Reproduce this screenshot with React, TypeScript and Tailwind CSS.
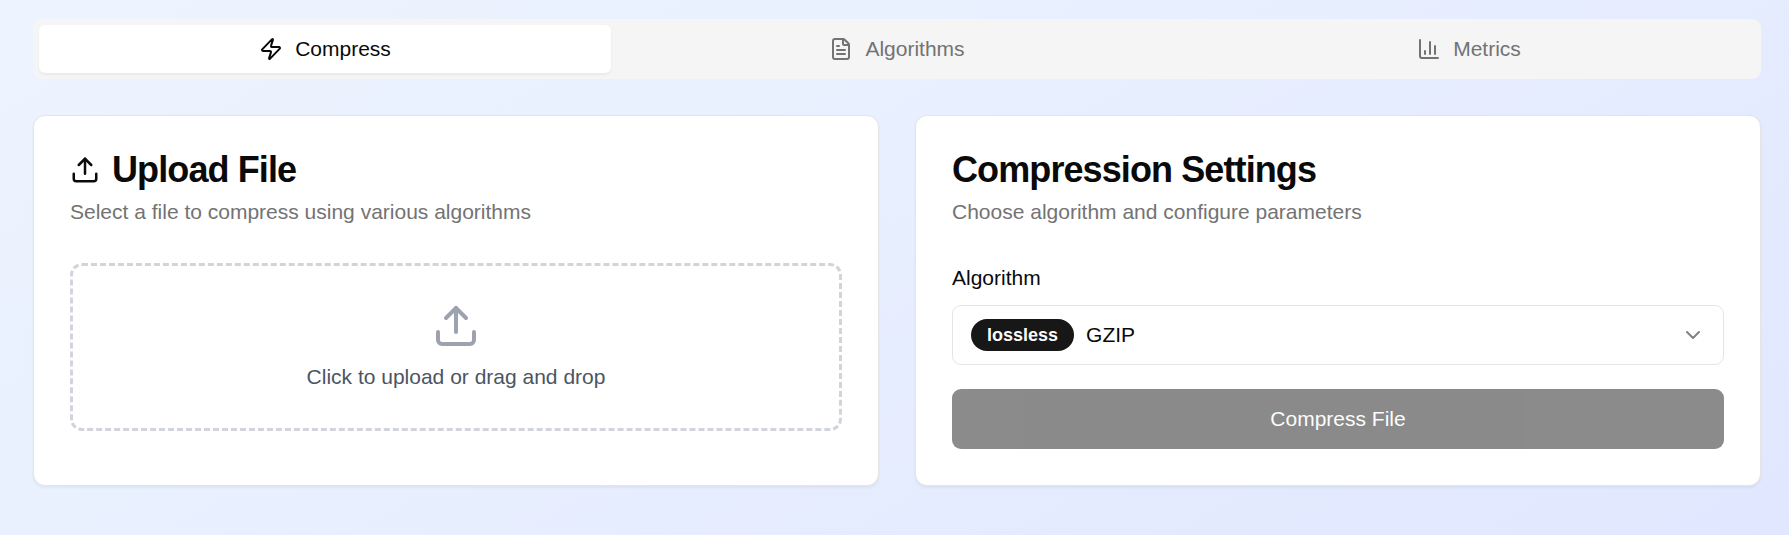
import type { ReactNode } from "react";
import { ChevronDown, FileText, Upload, Zap } from "lucide-react";

function ChartIcon() {
  return (
    <svg
      viewBox="0 0 24 24"
      className="mr-3 size-6"
      fill="none"
      stroke="currentColor"
      strokeWidth="2"
      strokeLinecap="round"
      strokeLinejoin="round"
    >
      <path d="M3 3v16a2 2 0 0 0 2 2h16" />
      <path d="M18 17V9" />
      <path d="M13 17V5" />
      <path d="M8 17v-3" />
    </svg>
  );
}

function Tab({ active = false, children }: { active?: boolean; children: ReactNode }) {
  return (
    <button
      className={
        active
          ? "flex items-center justify-center rounded-md bg-white text-[21px] leading-[30px] text-neutral-950 shadow-[0_1.5px_3px_rgba(0,0,0,0.05)]"
          : "flex items-center justify-center rounded-md text-[21px] leading-[30px] text-[#737373]"
      }
    >
      {children}
    </button>
  );
}

function Card({ title, description, children }: { title: ReactNode; description: string; children: ReactNode }) {
  return (
    <section className="rounded-xl border border-neutral-200 bg-white p-9 shadow-[0_1.5px_3px_rgba(0,0,0,0.05)]">
      <h3 className="flex items-center gap-3 text-[36px] leading-9 font-bold tracking-tight">{title}</h3>
      <p className="mt-[9px] mb-9 text-[21px] leading-[30px] text-[#737373]">{description}</p>
      {children}
    </section>
  );
}

export default function App() {
  return (
    <main className="h-[535px] overflow-hidden bg-[linear-gradient(150deg,#edf4ff_0%,#e8effe_45%,#e1e7fe_100%)] pt-[19px] pr-[28px] pl-[33px] font-['Liberation_Sans',Arial,sans-serif] text-neutral-950">
      <div className="grid h-[60px] grid-cols-3 rounded-[9px] bg-neutral-100 p-1.5">
        <Tab active>
          <Zap className="mr-3 size-6" />
          Compress
        </Tab>
        <Tab>
          <FileText className="mr-3 size-6" />
          Algorithms
        </Tab>
        <Tab>
          <ChartIcon />
          Metrics
        </Tab>
      </div>

      <div className="mt-9 grid grid-cols-2 gap-9">
        <Card
          title={
            <>
              <Upload className="size-[30px]" />
              Upload File
            </>
          }
          description="Select a file to compress using various algorithms"
        >
          <div className="flex flex-col items-center rounded-xl border-3 border-dashed border-[#d1d5db] p-9">
            <Upload className="mb-3 size-12 text-[#9ca3af]" />
            <p className="text-[21px] leading-[30px] text-[#4b5563]">Click to upload or drag and drop</p>
          </div>
        </Card>

        <Card title="Compression Settings" description="Choose algorithm and configure parameters">
          <label className="block text-[21px] leading-[30px]">Algorithm</label>
          <button className="mt-3 flex h-[60px] w-full items-center justify-between rounded-[9px] border border-neutral-200 px-[18px] text-[21px] leading-[30px]">
            <span className="flex items-center gap-3">
              <span className="rounded-full border border-transparent bg-neutral-900 px-[15px] py-[3px] text-[18px] leading-6 font-bold text-neutral-50">
                lossless
              </span>
              GZIP
            </span>
            <ChevronDown className="size-6 opacity-50" />
          </button>
          <button
            disabled
            className="mt-6 flex h-[60px] w-full items-center justify-center rounded-[9px] bg-neutral-900 text-[21px] leading-[30px] text-neutral-50 opacity-50"
          >
            Compress File
          </button>
        </Card>
      </div>
    </main>
  );
}
